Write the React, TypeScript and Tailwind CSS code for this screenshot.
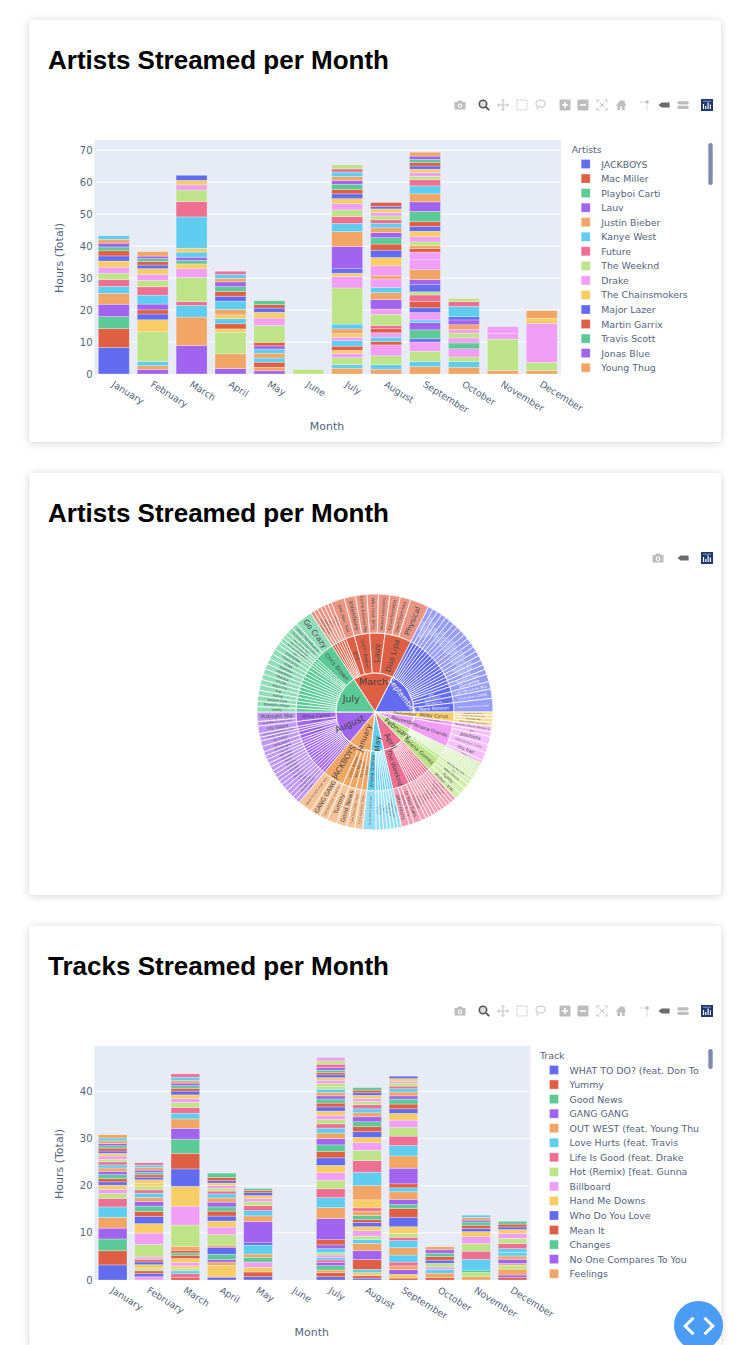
const colors: Record<string, string> = {
  b: '#636cf0',
  r: '#df5f45',
  g: '#5bca96',
  p: '#a064f0',
  o: '#f2a666',
  c: '#5fcdf0',
  k: '#ee6f92',
  l: '#bde587',
  m: '#f09ef6',
  y: '#f9cd66',
}

const months = ['January', 'February', 'March', 'April', 'May', 'June', 'July', 'August', 'September', 'October', 'November', 'December']

const artistBars = [
  'b8.3 r5.9 g3.75 p3.85 o3.4 c2.2 k2.1 l2 m1.9 y1.9 b1.6 r1.6 g1.2 p1.2 o1.2 c1.1',
  'p1.4 o1.2 c1.3 l9.3 y3.75 b1.8 r1.3 p1.8 c2.8 k2.6 l2 m1.9 y1.8 b1.1 r1.1 g.9 p.8 o1.4',
  'p8.9 o8.9 c3.6 k1.2 l7.6 m2.7 y1.5 g1.1 p1 c1.6 y1.2 c9.8 k4.8 l3.6 m1.6 y1.4 b1.6',
  'p1.7 o4.6 l6.8 y1 r1.6 c1.6 y1.2 o1.7 c2.6 b1.5 r1.5 g1.5 p1.5 o1.1 c1.2 k1',
  'p1 o1.1 r1.6 c1.3 o1.5 c1.3 p1 r1.1 l5.3 m2.3 y1.8 b1.3 r1.1 g1.2',
  'l1.4',
  'o1.8 c1.1 l2.2 m1.3 y1 r1.3 c1.7 m1.1 y1.1 o1.5 c1.5 l11.3 m3.6 y1 b1.4 p6.9 o4.7 c2.5 k2.2 l2.1 m1.9 y1.6 b1.5 r1.4 g1.6 p1.2 o1.2 c1.4 k1 l1.3',
  'o1.5 c1.4 l2.8 m3.4 r1.1 c1.3 m1.4 r1.3 k1 l3.4 m1.7 p3 o2.1 c1.6 m2.7 o1 m3.1 y2.6 b2.3 r1.9 g2 p1.6 o1.5 c1.4 k1.1 l1.2 m1.1 y1.1 b.8 r1.2',
  'o2.3 c1.6 l3.2 m2.9 b1 g2.8 p2.3 c.8 m2.3 b1.5 r1.9 k2.1 l1 b2.2 p1.6 o3.1 m3.1 m2.4 r1.1 o1 l1.1 m1.6 y1.7 b1.5 r1.5 g3.2 p3 o2.5 c2.5 k1.9 l1.1 m1.1 y1.1 b1 r1.1 g1 p1 o1.2',
  'o2.1 c1.8 l1.4 m2.6 g1.8 m1.6 l1.5 m1.1 o1.5 p1.5 b1 c3.2 k1.5 l1',
  'o1.1 l9.8 m1.7 m2.2',
  'o1.1 l2.5 m12.2 y1.6 o2.4',
]

const trackBars = [
  'b3.2 r3 g2.5 p2.3 o2.3 c2.2 k1.8 l1 m.9 y.9 b.7 r.7 g.85 p.7 o.7 c.65 k.65 l.55 m.7 y.55 b.5 r.6 g.5 p.5 o.55 c.6 o.7',
  'm.7 b.65 r.6 l.55 y.75 b.6 r.45 m.55 l2.7 m2.4 y2 b1.5 r1.1 g1.1 p1 o.85 c.9 k.7 l.8 y.65 y.7 b.55 r.5 g.5 p.5 o.55 c.5 k.5',
  'r.5 k.85 c.6 l.55 y.5 m.7 y.85 r.7 g.5 r.55 o.85 l4.5 m4 y4.2 b3.7 r3.3 g3 p2.3 o2 c1.2 k1.2 l1.1 m.8 y.8 b.8 r.6 g.55 p.55 o.55 c.7 k.7',
  'b.6 y2.5 o.7 p.55 g1.1 b1.5 o.45 l2.2 m1.6 y1.3 b1.05 r1.05 g.9 p1 o.9 c.85 k.6 l.6 m.55 y.55 b.5 r.7 g.9',
  'b.7 r1 y1 m1.1 g1 o.7 c1.9 b.5 p4.5 o1.2 c1.1 k1.05 l.85 m.65 y.65 b.6 r.5 g.4',
  '',
  'b.7 r.85 o.55 g.95 p.7 k.5 c.5 m.55 l.5 c.85 p.8 r1.1 p4.5 o2.3 c2.1 k1.9 l1.8 m1.6 y1.55 b1.6 r1.35 g1.4 p1.3 o1.2 c1.05 k.9 l.9 m.9 y.9 b.9 r.8 g.85 p.7 o.7 c.7 l.6 l.6 m.7 y.55 b.6 r.5 g.5 p.55 k.7 l.7 m.7',
  'b.4 r.5 y.65 c.7 r2.1 p1.85 o1.55 c.85 l.7 m1.15 y.85 b.9 r.65 g.85 o.9 k.7 y1.7 o3 c2.85 k2.45 l2.2 m1.6 y1.15 b1.2 r1.05 g1.05 p1.05 o.85 c.85 k.85 l.7 m.65 y.65 b.55 r.55 g.55',
  'r.4 y.8 p1 o.8 k.8 c1.5 o1.55 c1.5 k.7 l.85 y1.4 b2 r1.9 g.8 p1.1 o1.6 c.85 r.85 p3.3 o2.6 c2.2 k2 l1.85 m1.55 y1.4 b1 r1 g1.05 p.7 o.8 c.7 k.55 l.65 m.4 y.55 b.5',
  'r.55 o.9 c.8 m.5 l.8 b.65 r.8 g.7 p.7 o.65',
  'o.7 l.9 g.5 c2.3 k1.7 l1.6 m1.5 y1.05 b.65 r.7 g.7 p.4 o.55 c.5',
  'r.5 p.55 o1.25 l.85 o.35 p.9 o.7 c.7 c.85 k1.05 l1.1 m1.05 y.85 b.55 r.6 g.6',
]

const artistLegend = ['JACKBOYS', 'Mac Miller', 'Playboi Carti', 'Lauv', 'Justin Bieber', 'Kanye West', 'Future', 'The Weeknd', 'Drake', 'The Chainsmokers', 'Major Lazer', 'Martin Garrix', 'Travis Scott', 'Jonas Blue', 'Young Thug']
const trackLegend = ['WHAT TO DO? (feat. Don To', 'Yummy', 'Good News', 'GANG GANG', 'OUT WEST (feat. Young Thu', 'Love Hurts (feat. Travis', 'Life Is Good (feat. Drake', 'Hot (Remix) [feat. Gunna', 'Billboard', 'Hand Me Downs', 'Who Do You Love', 'Mean It', 'Changes', 'No One Compares To You', 'Feelings']
const legendKeys = 'brgpockl' + 'my' + 'brgpo'

const axisText = '#55647d'
const chartFont = '"DejaVu Sans", sans-serif'

type ChartProps = {
  bars: string[]
  unit: number
  ticks: number[]
  right: number
  barStep: number
  barWidth: number
  monthX: number
  legendTitle: string
  legend: string[]
  legendX: number
  legendStep: number
  thumbHeight: number
}

const BarChart = ({ bars, unit, ticks, right, barStep, barWidth, monthX, legendTitle, legend, legendX, legendStep, thumbHeight }: ChartProps) => {
  const bottom = 374
  const left = 94.3
  return (
    <svg viewBox="29 130 692 312" className="block w-[692px] h-[312px]" style={{ fontFamily: chartFont }}>
      <rect x={left} y={140} width={right - left} height={bottom - 140} fill="#e6ebf6" />
      {ticks.map((t) => (
        <g key={t}>
          {t > 0 && <line x1={left} x2={right} y1={bottom - t * unit} y2={bottom - t * unit} stroke="#fff" strokeWidth="1" />}
          <text x={92.5} y={bottom - t * unit + 3.5} textAnchor="end" fontSize="10" fill={axisText}>{t}</text>
        </g>
      ))}
      {bars.map((bar, i) => {
        const x = left + 4 + i * barStep
        let y = bottom
        const segments = bar ? bar.split(' ') : []
        return (
          <g key={months[i]}>
            {segments.map((s, j) => {
              const h = parseFloat(s.slice(1)) * unit
              y -= h
              return <rect key={j} x={x} y={y} width={barWidth} height={h} fill={colors[s[0]]} stroke="#fff" strokeOpacity="0.4" strokeWidth="0.7" />
            })}
            <text transform={`translate(${x + barWidth / 2 + 1} 380) rotate(32)`} fontSize="9.4" dy="7" fill={axisText}>{months[i]}</text>
          </g>
        )
      })}
      <text x={monthX} y={430} textAnchor="middle" fontSize="11" fill={axisText}>Month</text>
      <text transform="translate(63 258) rotate(-90)" textAnchor="middle" fontSize="11" fill={axisText}>Hours (Total)</text>
      <text x={legendX} y={153} fontSize="9.4" fill={axisText}>{legendTitle}</text>
      {legend.map((name, i) => {
        const cy = 164 + i * legendStep
        return (
          <g key={name}>
            <rect x={legendX + 9.5} y={cy - 4.5} width={9} height={9} fill={colors[legendKeys[i]]} stroke="#fff" strokeOpacity="0.4" strokeWidth="0.7" />
            <text x={legendX + 29.5} y={cy + 3.5} fontSize="9.4" fill={axisText}>{name}</text>
          </g>
        )
      })}
      <rect x={708.3} y={143} width={4.4} height={thumbHeight} rx={2.2} fill="#808bab" />
    </svg>
  )
}

/* sunburst */

type Artist = [string, [string, number][]]

const pool = ['Lonely', 'Come & Go', 'Circles', 'Blueberry Faygo', 'ROCKSTAR', 'The Box', 'Savage Love', 'Say So', 'Intentions', 'Falling', 'Blinding Lights', 'Heartless', 'Dior', 'Toosie Slide', 'Roses', 'Adore You']

const thin = (n: number, w: number, tracks = 1): Artist[] =>
  Array.from({ length: n }, (_, i) => [
    '',
    Array.from({ length: tracks }, (_, j): [string, number] => [pool[(i * 3 + j) % pool.length], w / tracks]),
  ])

const one = (a: string, t: string, w: number): Artist => [a, [[t, w]]]

const burst: { name: string; c: string; from: number; to: number; rot: number; size: number; r: number; artists: Artist[] }[] = [
  {
    name: 'March', c: 'r', from: -33, to: 27, rot: 0, size: 9.5, r: 30,
    artists: [
      ...thin(6, 2),
      one('BTS', 'Dhd (feat. Sia)', 7),
      ['Justin Bieber', [['Intentions', 6], ['Come Around Me', 6]]],
      ['Lauv', [['Who (feat. BTS)', 6], ['Modern Loneliness', 6]]],
      ['Dua Lipa', [['Future Nostalgia', 5.5], ["Don't Start Now", 5.5], ['Physical', 10]]],
    ],
  },
  {
    name: 'September', c: 'b', from: 27, to: 90, rot: 52, size: 7.5, r: 32,
    artists: [
      ...thin(18, 2.4),
      one('BTS', 'Dynamite', 3.6),
      one('Justin Bieber', 'Let Me Love You', 3.6),
      one('Disclosure', 'Cruel (feat. ZAYN)', 4.5),
      one('Mark Ronson', 'Nothing Breaks Like a Heart', 6.5),
    ],
  },
  {
    name: 'December', c: 'y', from: 90, to: 97, rot: 3, size: 4.5, r: 30,
    artists: [['Miley Cyrus', [['Midnight Sky (Remix)', 1], ['Prisoner (feat. Dua Lipa)', 1], ['Midnight Sky', 1.2], ['Heart Of Glass (Live from', 1.2]]]],
  },
  {
    name: 'November', c: 'm', from: 97, to: 116, rot: 17, size: 5, r: 30,
    artists: [
      ['Shawn Mendes', [['Monster (Shawn Mendes &', 2.4]]],
      ['Ariana Grande', [['pov', 2], ['positions', 3.5], ['safety net (feat. Ty Dolla', 3.6], ['my hair', 3.5], ['nasty', 1.5]]],
    ],
  },
  {
    name: 'February', c: 'l', from: 116, to: 137, rot: 36, size: 7, r: 28,
    artists: [
      ...thin(7, 1.2),
      one('The Chainsmokers', 'Who Do You Love', 2.2),
      ['Selena Gomez', [['Rare', 1.8], ['After Hours', 3], ['Family', 3.6], ['Mother - 8 Mi', 3.4]]],
    ],
  },
  {
    name: 'April', c: 'k', from: 137, to: 167, rot: 60, size: 7.5, r: 33,
    artists: [
      ...thin(10, 1.8),
      ['The Weeknd', [['Snowchild', 2.5], ['In Your Eyes', 4], ['Hardest To Love', 2.5], ['After Hours', 4]]],
    ],
  },
  {
    name: 'May', c: 'c', from: 167, to: 186, rot: -90, size: 7.5, r: 32,
    artists: [
      ...thin(7, 1.8),
      one('Ariana Grande', 'Stuck with U (with Justin', 6.5),
    ],
  },
  {
    name: 'January', c: 'o', from: 186, to: 220, rot: -68, size: 7.5, r: 28,
    artists: [
      one('Future', 'Life Is Good (feat. Drake', 4),
      one('Travis Scott', 'Love Hurts (feat. Travis', 4),
      one('Mac Miller', 'Good News', 5),
      one('Justin Bieber', 'Yummy', 5),
      ['JACKBOYS', [['OUT WEST (feat. Young Thu', 4], ['GANG GANG', 5], ['WHAT TO DO? (feat. Don', 7]]],
    ],
  },
  {
    name: 'August', c: 'p', from: 220, to: 270, rot: -24, size: 9, r: 28,
    artists: [
      ...thin(15, 2.2),
      one('Justin Bieber', 'Stay and I', 3),
      one('Lil Baby', 'Go Crazy', 3),
      one('Future', 'Be Kind (with Halsey)', 2),
      one('Halsey', 'Summer Feelings (feat. Charlie', 2),
      one('Drake', 'my future', 4),
      ['Miley Cyrus', [['Laugh Now Cry Later (feat.', 2.5], ['Midnight Sky', 5]]],
    ],
  },
  {
    name: 'July', c: 'g', from: 270, to: 327, rot: 0, size: 9.5, r: 27,
    artists: [
      ...thin(13, 2.8),
      one('Kehlani', 'Lost', 2),
      one('Halsey', 'Be Kind (with Halsey)', 2),
      one('Juice WRLD', 'Hate The Other Side', 2),
      one('Young Thug', 'Don\'t Kill My High', 2),
      ['Chris Brown', [['No Guidance (feat. Drake)', 3], ['Under The Influence', 3], ['Go Crazy', 9]]],
    ],
  },
]

const point = (r: number, a: number) => {
  const t = (a * Math.PI) / 180
  return `${(375 + r * Math.sin(t)).toFixed(2)} ${(712 - r * Math.cos(t)).toFixed(2)}`
}

const sector = (r0: number, r1: number, a0: number, a1: number) =>
  `M${point(r0, a0)}L${point(r1, a0)}A${r1} ${r1} 0 0 1 ${point(r1, a1)}L${point(r0, a1)}A${r0} ${r0} 0 0 0 ${point(r0, a0)}Z`

const Slice = ({ r0, r1, a0, a1, fill, opacity, label, textFill }: { r0: number; r1: number; a0: number; a1: number; fill: string; opacity: number; label: string; textFill: string }) => {
  const mid = (a0 + a1) / 2
  const rm = (r0 + r1) / 2
  const across = (rm * (a1 - a0) * Math.PI) / 180
  const size = Math.min(across * 0.68, (r1 - r0 - 3) / (0.6 * Math.max(label.length, 1)), 11)
  const norm = ((mid % 360) + 360) % 360
  const rot = norm < 180 ? norm - 90 : norm + 90
  return (
    <g>
      <path d={sector(r0, r1, a0, a1)} fill={fill} fillOpacity={opacity} stroke="#fff" strokeWidth="0.75" />
      {label && size > 1.8 && (
        <text transform={`translate(${point(rm, mid)}) rotate(${rot})`} textAnchor="middle" dy=".35em" fontSize={size.toFixed(2)} fill={textFill}>
          {label}
        </text>
      )}
    </g>
  )
}

const Sunburst = () => (
  <svg viewBox="29 583 692 312" className="block w-[692px] h-[312px]" style={{ fontFamily: chartFont }}>
    {burst.map((m) => {
      const total = m.artists.reduce((sum, a) => sum + a[1].reduce((s, t) => s + t[1], 0), 0)
      const scale = (m.to - m.from) / total
      const textFill = m.c === 'b' ? '#f4f5ff' : '#4a4a4a'
      let angle = m.from
      const mid = (m.from + m.to) / 2
      return (
        <g key={m.name}>
          {m.artists.map((artist, i) => {
            const start = angle
            const tracks = artist[1].map((t, j) => {
              const a0 = angle
              angle += t[1] * scale
              return <Slice key={j} r0={79} r1={118} a0={a0} a1={angle} fill={colors[m.c]} opacity={0.66} label={t[0]} textFill={textFill} />
            })
            return (
              <g key={i}>
                <Slice r0={39} r1={79} a0={start} a1={angle} fill={colors[m.c]} opacity={1} label={artist[0]} textFill={textFill} />
                {tracks}
              </g>
            )
          })}
          <path d={sector(0, 39, m.from, m.to)} fill={colors[m.c]} stroke="#fff" strokeWidth="0.9" />
          <text transform={`translate(${point(m.r, mid)}) rotate(${m.rot})`} textAnchor="middle" dy=".35em" fontSize={m.size} fill={m.c === 'b' ? '#f4f5ff' : '#444'}>
            {m.name}
          </text>
        </g>
      )
    })}
  </svg>
)

/* modebar */

const Icon = ({ children }: { children: React.ReactNode }) => (
  <svg viewBox="0 0 12 12" className="w-3 h-3 shrink-0">{children}</svg>
)

const grey = '#bdbdbd'

const Camera = () => (
  <Icon>
    <path d="M0.5 3h2.7l1-1.6h3.6l1 1.6h2.7v7.6H0.5z" fill={grey} />
    <circle cx="6" cy="6.7" r="2.3" fill="#fff" />
    <circle cx="6" cy="6.7" r="1.3" fill={grey} />
  </Icon>
)
const Zoom = () => (
  <Icon>
    <circle cx="5" cy="5" r="3.7" fill="#ddd" stroke="#555" strokeWidth="1.6" />
    <path d="M7.8 7.8 11.2 11.2" stroke="#555" strokeWidth="1.8" />
  </Icon>
)
const Pan = () => (
  <Icon>
    <path d="M6 .5v11M.5 6h11M6 .5 4.5 2.4M6 .5l1.5 1.9M6 11.5 4.5 9.6M6 11.5l1.5-1.9M.5 6l1.9-1.5M.5 6l1.9 1.5M11.5 6 9.6 4.5M11.5 6 9.6 7.5" stroke={grey} strokeWidth="0.9" fill="none" />
  </Icon>
)
const BoxSelect = () => (
  <Icon>
    <rect x="1" y="1" width="10" height="10" fill="none" stroke={grey} strokeWidth="1" strokeDasharray="1.4 1.2" />
  </Icon>
)
const Lasso = () => (
  <Icon>
    <ellipse cx="6.6" cy="4.6" rx="4.6" ry="3.5" fill="none" stroke={grey} strokeWidth="1" />
    <path d="M3.6 7.4c-1 1-.6 2 .2 2.2-.4.6-.8 1-1.4 1.6" fill="none" stroke={grey} strokeWidth="1" />
  </Icon>
)
const ZoomIn = () => (
  <Icon>
    <rect x="0.5" y="0.5" width="11" height="11" rx="1" fill={grey} />
    <path d="M6 3v6M3 6h6" stroke="#fff" strokeWidth="1.6" />
  </Icon>
)
const ZoomOut = () => (
  <Icon>
    <rect x="0.5" y="0.5" width="11" height="11" rx="1" fill={grey} />
    <path d="M3 6h6" stroke="#fff" strokeWidth="1.6" />
  </Icon>
)
const Autoscale = () => (
  <Icon>
    <path d="M1 3.5V1h2.5M8.5 1H11v2.5M11 8.5V11H8.5M3.5 11H1V8.5M3.5 3.5l5 5M8.5 3.5l-5 5" fill="none" stroke={grey} strokeWidth="0.9" />
  </Icon>
)
const Home = () => (
  <Icon>
    <path d="M6 1 .6 6.4h1.7V11h2.8V7.6h1.8V11h2.8V6.4h1.7L9.6 4V1.6H8.2v1z" fill={grey} />
  </Icon>
)
const Spikes = () => (
  <Icon>
    <path d="M1 3h5" stroke={grey} strokeWidth="1" strokeDasharray="1.3 1.1" />
    <path d="M8 5.5v6" stroke={grey} strokeWidth="1" strokeDasharray="1.3 1.1" />
    <circle cx="8" cy="3" r="1.8" fill={grey} />
  </Icon>
)
const Tag = () => (
  <Icon>
    <path d="M.5 6 3.6 3.4h8v5.2h-8z" fill="#6c6c6c" />
  </Icon>
)
const Compare = () => (
  <Icon>
    <rect x="0.3" y="2.3" width="11.4" height="3.1" rx="1.4" fill={grey} />
    <rect x="0.3" y="6.8" width="11.4" height="3.1" rx="1.4" fill={grey} />
  </Icon>
)
const PlotlyLogo = () => (
  <Icon>
    <rect width="12" height="12" fill="#1f3a70" />
    <path d="M2.5 5v5M4.8 7v3M7.1 3.5V10M9.4 5.5V10" stroke="#fff" strokeWidth="1.2" />
    <path d="M2 2.2h8" stroke="#9fb0d0" strokeWidth="0.8" />
  </Icon>
)

const Group = ({ children }: { children: React.ReactNode }) => (
  <div className="flex items-center gap-[6.7px]">{children}</div>
)

const FullModebar = () => (
  <div className="flex justify-end items-center gap-[12.4px] pr-2 h-3 mt-[23px]">
    <Group><Camera /></Group>
    <Group><Zoom /><Pan /><BoxSelect /><Lasso /></Group>
    <Group><ZoomIn /><ZoomOut /><Autoscale /><Home /></Group>
    <Group><Spikes /><Tag /><Compare /></Group>
    <Group><PlotlyLogo /></Group>
  </div>
)

const SmallModebar = () => (
  <div className="flex justify-end items-center gap-[12.4px] pr-2 h-3 mt-[23px]">
    <Group><Camera /></Group>
    <Group><Tag /></Group>
    <Group><PlotlyLogo /></Group>
  </div>
)

const Card = ({ title, children }: { title: string; children: React.ReactNode }) => (
  <section className="w-[692px] h-[422px] bg-white rounded shadow-[0_1px_8px_rgba(0,0,0,0.18)] shrink-0">
    <h2 className="pl-[19px] pt-6 text-[26px] leading-8 font-bold text-black font-['Liberation_Sans',sans-serif]">{title}</h2>
    {children}
  </section>
)

const App = () => (
  <main className="relative h-[1345px] overflow-hidden bg-white pt-5 pl-[29px] flex flex-col gap-[31px]">
    <Card title="Artists Streamed per Month">
      <FullModebar />
      <div className="mt-[19px]">
        <BarChart
          bars={artistBars}
          unit={3.2}
          ticks={[0, 10, 20, 30, 40, 50, 60, 70]}
          right={561}
          barStep={38.9}
          barWidth={31}
          monthX={327}
          legendTitle="Artists"
          legend={artistLegend}
          legendX={571.7}
          legendStep={14.55}
          thumbHeight={42}
        />
      </div>
    </Card>
    <Card title="Artists Streamed per Month">
      <SmallModebar />
      <div className="mt-[19px]">
        <Sunburst />
      </div>
    </Card>
    <Card title="Tracks Streamed per Month">
      <FullModebar />
      <div className="mt-[19px]">
        <BarChart
          bars={trackBars}
          unit={4.717}
          ticks={[0, 10, 20, 30, 40]}
          right={530.3}
          barStep={36.35}
          barWidth={28.7}
          monthX={311.7}
          legendTitle="Track"
          legend={trackLegend}
          legendX={540}
          legendStep={14.55}
          thumbHeight={20}
        />
      </div>
    </Card>
    <button
      aria-label="Toggle source"
      className="absolute left-[674px] top-[1301px] w-[49px] h-[49px] rounded-full bg-[#4a9cf5] flex items-center justify-center"
    >
      <svg viewBox="0 0 36 24" className="w-[34px] h-[22px]" fill="none" stroke="#fff" strokeWidth="3.4">
        <path d="M12 3 3 12l9 9M24 3l9 9-9 9" />
      </svg>
    </button>
  </main>
)

export default App
